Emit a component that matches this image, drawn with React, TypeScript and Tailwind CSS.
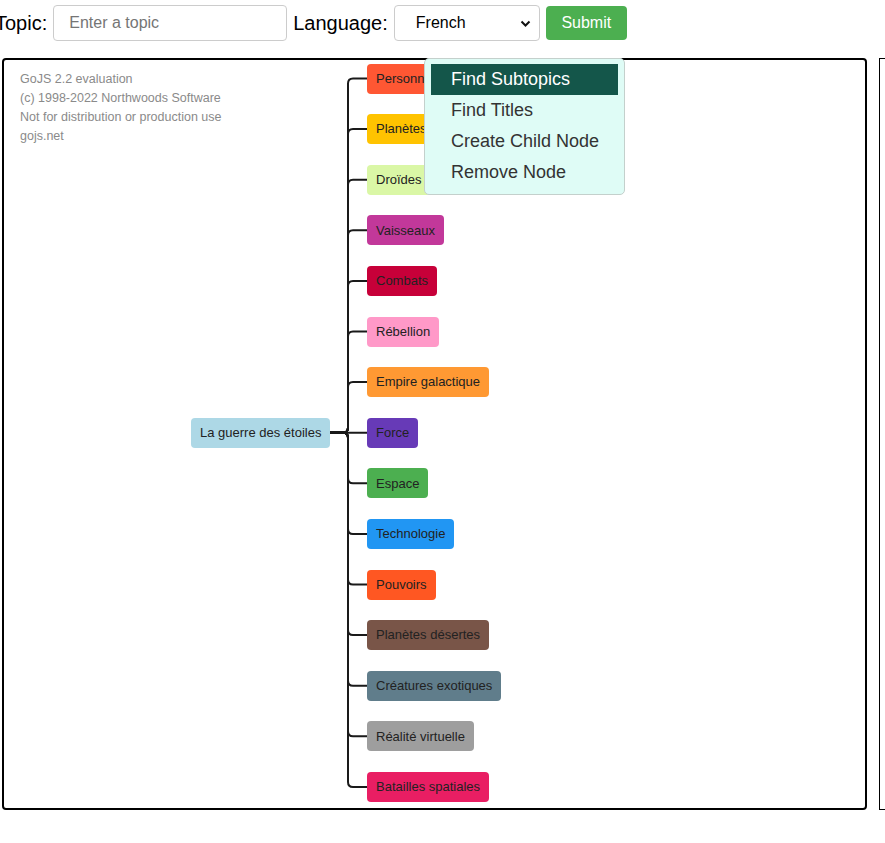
import React from 'react';

type TopicNode = { label: string; color: string };

const children: TopicNode[] = [
  { label: 'Personnages', color: '#FF5733' },
  { label: 'Planètes', color: '#FFC300' },
  { label: 'Droïdes', color: '#DAF7A6' },
  { label: 'Vaisseaux', color: '#C2389A' },
  { label: 'Combats', color: '#C70039' },
  { label: 'Rébellion', color: '#FF99C8' },
  { label: 'Empire galactique', color: '#FF9933' },
  { label: 'Force', color: '#673AB7' },
  { label: 'Espace', color: '#4CAF50' },
  { label: 'Technologie', color: '#2196F3' },
  { label: 'Pouvoirs', color: '#FF5722' },
  { label: 'Planètes désertes', color: '#795548' },
  { label: 'Créatures exotiques', color: '#607D8B' },
  { label: 'Réalité virtuelle', color: '#9E9E9E' },
  { label: 'Batailles spatiales', color: '#E91E63' },
];

// diagram coords (relative to the canvas padding box)
const STEP = 50.6;
const FIRST_TOP = 3.5;
const BUS_X = 344;
const CHILD_X = 363;
const ROOT_RIGHT = 326;
const ROOT_CY = FIRST_TOP + 7 * STEP + 15;

const linkPath = (cy: number) => {
  if (Math.abs(cy - ROOT_CY) < 1) return `M ${ROOT_RIGHT} ${ROOT_CY} H ${CHILD_X}`;
  const dir = cy < ROOT_CY ? -1 : 1;
  const r = 5;
  return `M ${ROOT_RIGHT} ${ROOT_CY} H ${BUS_X - r} Q ${BUS_X} ${ROOT_CY} ${BUS_X} ${ROOT_CY + dir * r} V ${cy - dir * r} Q ${BUS_X} ${cy} ${BUS_X + r} ${cy} H ${CHILD_X}`;
};

const menuItems = ['Find Subtopics', 'Find Titles', 'Create Child Node', 'Remove Node'];

export default function App() {
  return (
    <div className="w-[885px] h-[843px] overflow-hidden bg-white font-['Liberation_Sans',Arial,sans-serif] text-black">
      {/* top form */}
      <div className="flex items-center gap-[6px] pt-[5px] h-[41px]">
        <label className="-ml-[5px] text-[20px] leading-none">Topic:</label>
        <input
          className="w-[234px] h-[36px] border border-[#ccc] rounded-[4px] px-[15px] text-[16px] placeholder:text-[#757575] outline-none"
          placeholder="Enter a topic"
        />
        <label className="text-[20px] leading-none">Language:</label>
        <div className="relative w-[146px] h-[36px] border border-[#ccc] rounded-[4px] flex items-center pl-[21px] text-[16px]">
          French
          <svg className="absolute right-[8px] top-[14px]" width="11" height="8" viewBox="0 0 11 8">
            <path d="M1.5 1.5 L5.5 5.5 L9.5 1.5" fill="none" stroke="#111" strokeWidth="2" />
          </svg>
        </div>
        <button className="w-[81px] h-[34px] bg-[#4CAF50] text-white text-[16px] rounded-[4px]">Submit</button>
      </div>

      {/* diagram + side panel */}
      <div className="flex gap-[12px] mt-[17px] ml-[2px]">
        <div className="relative shrink-0 w-[865px] h-[752px] border-2 border-black rounded-[4px]">
          <div className="absolute left-[16px] top-[10px] text-[12.5px] leading-[19px] text-[#8a8a8a]">
            <div>GoJS 2.2 evaluation</div>
            <div>(c) 1998-2022 Northwoods Software</div>
            <div>Not for distribution or production use</div>
            <div>gojs.net</div>
          </div>

          <svg className="absolute left-0 top-0" width="861" height="748">
            {children.map((c, i) => (
              <path key={c.label} d={linkPath(FIRST_TOP + i * STEP + 15)} fill="none" stroke="#1a1a1a" strokeWidth="2" />
            ))}
          </svg>

          <div
            className="absolute left-[187px] h-[30px] px-[9px] flex items-center rounded-[4px] bg-[#ADD8E6] text-[13px] text-[#222] whitespace-nowrap"
            style={{ top: ROOT_CY - 15 }}
          >
            La guerre des étoiles
          </div>

          {children.map((c, i) => (
            <div
              key={c.label}
              className="absolute left-[363px] h-[30px] px-[9px] flex items-center rounded-[4px] text-[13px] text-[#222] whitespace-nowrap"
              style={{ top: FIRST_TOP + i * STEP, backgroundColor: c.color }}
            >
              {c.label}
            </div>
          ))}

          {/* context menu */}
          <div className="absolute left-[420px] -top-[2px] w-[201px] h-[137px] px-[6px] pt-[5px] bg-[#DFFCF6] border border-[#c4d0cc] rounded-[5px] text-[18px]">
            {menuItems.map((m, i) => (
              <div
                key={m}
                className={
                  i === 0
                    ? 'h-[31px] pl-[20px] flex items-center bg-[#14564A] text-white'
                    : 'h-[31px] pl-[20px] flex items-center text-[#333]'
                }
              >
                {m}
              </div>
            ))}
          </div>
        </div>

        <div className="shrink-0 w-[300px] h-[752px] border border-black" />
      </div>
    </div>
  );
}
